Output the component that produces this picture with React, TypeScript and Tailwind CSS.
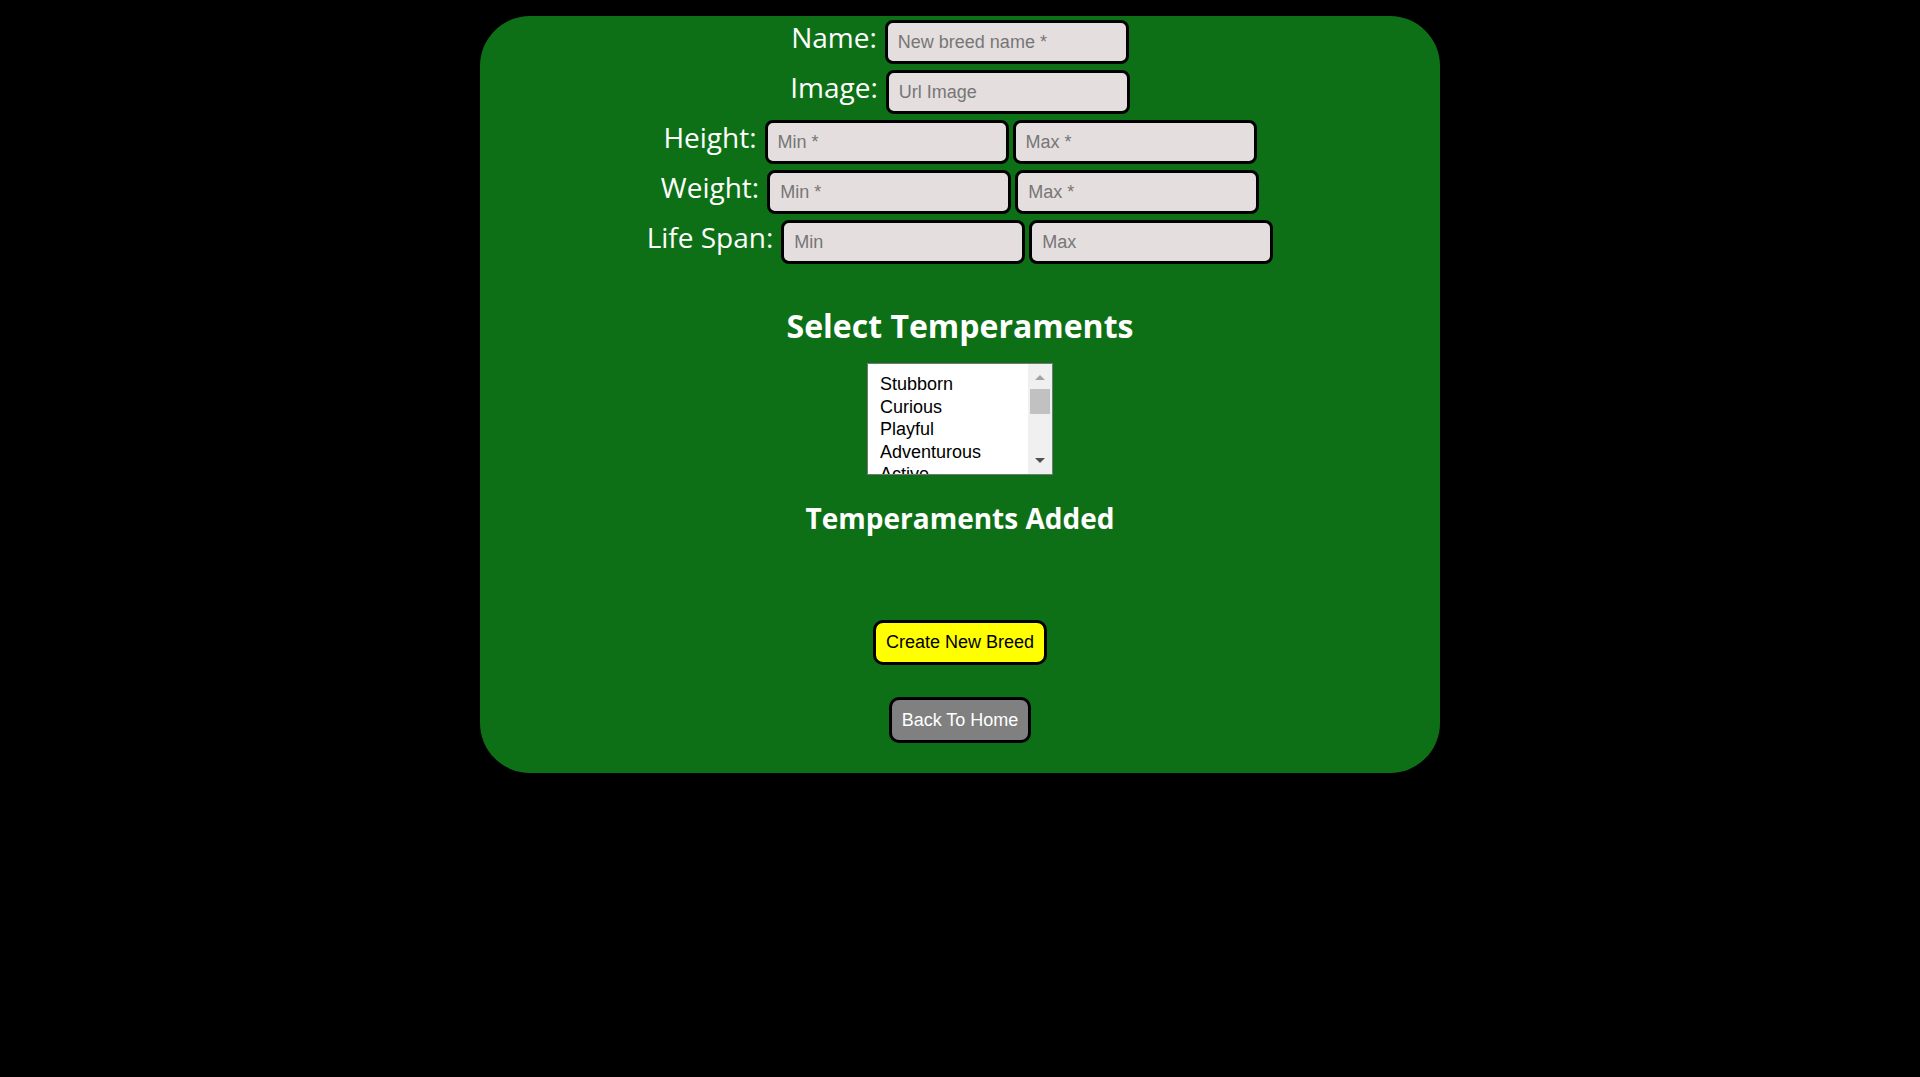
import { useState } from "react";

const temperaments = [
  "Stubborn",
  "Curious",
  "Playful",
  "Adventurous",
  "Active",
  "Fun-loving",
  "Aloof",
  "Clownish",
  "Dignified",
  "Independent",
];

const labelCls =
  "text-[28px] leading-none text-white [font-family:'Open_Sans','Noto_Sans',sans-serif]";
const inputCls =
  "h-[44px] w-[244px] rounded-[8px] border-[3px] border-black bg-[#e4dede] px-[10px] text-[18px] text-black outline-none placeholder:text-[#767676] [font-family:'Liberation_Sans',Arial,sans-serif]";

function Row({ label, fields }: { label: string; fields: string[] }) {
  return (
    <div className="flex items-baseline justify-center gap-2">
      <label className={labelCls}>{label}</label>
      <div className="flex items-baseline gap-[4px]">
        {fields.map((p) => (
          <input key={p} className={inputCls} placeholder={p} />
        ))}
      </div>
    </div>
  );
}

function ListBox() {
  return (
    <div className="relative h-[112px] w-[186px] overflow-hidden border border-[#767676] bg-white">
      <ul className="pl-[12px] pt-[9px] text-[18px] leading-[22.6px] text-black [font-family:'Liberation_Sans',Arial,sans-serif]">
        {temperaments.map((t) => (
          <li key={t}>{t}</li>
        ))}
      </ul>
      {/* fake scrollbar */}
      <div className="absolute right-0 top-0 flex h-full w-[24px] flex-col items-center bg-[#f0f0f0]">
        <div className="mt-[11px] h-0 w-0 border-x-[5px] border-b-[5px] border-x-transparent border-b-[#a3a3a3]" />
        <div className="mt-[9px] h-[25px] w-[20px] bg-[#c1c1c1]" />
        <div className="mt-auto mb-[11px] h-0 w-0 border-x-[5px] border-t-[5px] border-x-transparent border-t-[#505050]" />
      </div>
    </div>
  );
}

export default function App() {
  const [added] = useState<string[]>([]);
  return (
    <div className="min-h-screen bg-black pt-4">
      <div className="mx-auto flex w-[960px] flex-col items-center rounded-[50px] bg-[#0e7016] pb-[30px] pt-[4px]">
        <div className="flex flex-col gap-[6px]">
          <Row label="Name:" fields={["New breed name *"]} />
          <Row label="Image:" fields={["Url Image"]} />
          <Row label="Height:" fields={["Min *", "Max *"]} />
          <Row label="Weight:" fields={["Min *", "Max *"]} />
          <Row label="Life Span:" fields={["Min", "Max"]} />
        </div>

        <h2 className="mt-[42px] text-[32px] font-bold leading-[40px] text-white [font-family:'Open_Sans','Noto_Sans',sans-serif]">
          Select Temperaments
        </h2>
        <div className="mt-[17px]">
          <ListBox />
        </div>

        <h3 className="mt-[23px] text-[28px] font-bold leading-[40px] text-white [font-family:'Open_Sans','Noto_Sans',sans-serif]">
          Temperaments Added
        </h3>
        <div className="min-h-0">
          {added.map((a) => (
            <span key={a}>{a}</span>
          ))}
        </div>

        <button className="mt-[82px] h-[45px] rounded-[10px] border-[3px] border-black bg-[#ffff00] px-[10px] text-[18px] text-black [font-family:'Liberation_Sans',Arial,sans-serif]">
          Create New Breed
        </button>
        <button className="mt-[32px] h-[46px] rounded-[10px] border-[3px] border-black bg-[#808080] px-[10px] text-[18px] text-white [font-family:'Liberation_Sans',Arial,sans-serif]">
          Back To Home
        </button>
      </div>
    </div>
  );
}
